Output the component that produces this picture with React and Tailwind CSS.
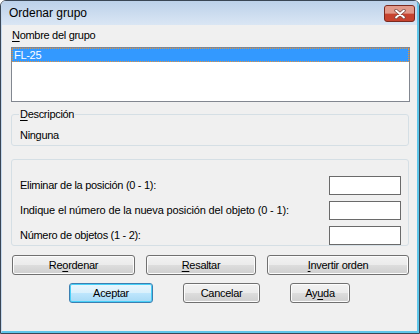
import React from 'react';

const font = { fontFamily: '"Liberation Sans", Arial, sans-serif' };

const Mn = ({ children }) => <span className="underline underline-offset-[2px]">{children}</span>;

const Btn = ({ w, children, primary }) => (
  <div
    className={`${w} h-[20px] flex items-center justify-center rounded-[3px] border text-[11px] tracking-[-0.3px] text-black ${
      primary
        ? 'border-[#3c7fb1] shadow-[inset_0_0_0_1px_#48d0f8] bg-[#d9f0fc] bg-[linear-gradient(#eaf6fd_0%,#d9f0fc_50%,#bee6fd_51%,#a7d9f5_100%)]'
        : 'border-[#707070] shadow-[inset_0_0_0_1px_#fcfcfc] bg-[#e5e5e5] bg-[linear-gradient(#f2f2f2_0%,#ebebeb_50%,#dddddd_51%,#cfcfcf_100%)]'
    }`}
  >
    {children}
  </div>
);

const Row = ({ label, tight }) => (
  <div className="flex items-center justify-between h-[19px]">
    <span className={`text-[11px] text-black leading-[13px] ${tight ? 'tracking-[-0.15px]' : 'tracking-[-0.3px]'}`}>{label}</span>
    <input className="w-[72px] h-[19px] bg-white border border-[#6a6a6a] outline-none" />
  </div>
);

const CloseBtn = () => (
  <div className="relative w-[31px] h-[17px] rounded-[3px] border border-[#7a2a20] bg-[#c7432f] overflow-hidden">
    <div className="h-[7px] bg-[#e29a8b]" />
    <div className="h-[1px] bg-[#d87a69]" />
    <svg className="absolute left-[8px] top-[3px]" width="14" height="10" viewBox="0 0 14 10">
      <path d="M3 1.5 L11 8.5 M11 1.5 L3 8.5" stroke="#7a4a44" strokeWidth="3.4" strokeLinecap="round" />
      <path d="M3 1.5 L11 8.5 M11 1.5 L3 8.5" stroke="#ffffff" strokeWidth="1.8" strokeLinecap="round" />
    </svg>
  </div>
);

export default function App() {
  return (
    <div style={font} className="w-[420px] h-[334px] border border-[#3a4655] rounded-t-[6px] overflow-hidden bg-[#f0f0f0]">
      <div className="h-full flex flex-col border-l border-l-[#c5d9ee] border-r-2 border-r-[#5ec6ea] border-b-2 border-b-[#5ec6ea]">
        {/* title bar */}
        <div className="h-[24px] flex items-center justify-between bg-[#cddcef] bg-[linear-gradient(#bcd1ea,#dae6f4)] pl-[7px] pr-[2px]">
          <span className="text-[12px] text-black">Ordenar grupo</span>
          <CloseBtn />
        </div>

        {/* body */}
        <div className="flex flex-col pl-[9px]">
          <div className="mt-[4px] h-[13px] leading-[13px] text-[11px] tracking-[-0.3px] text-black pl-[1px]">
            <Mn>N</Mn>ombre del grupo
          </div>
          <div className="mt-[5px] w-[399px] h-[55px] bg-white border border-[#828790]">
            <div className="h-[14px] bg-[#3399ff] border border-dotted border-[#e8933a] text-white text-[11px] tracking-[-0.3px] leading-[12px] pl-[1px]">
              FL-25
            </div>
          </div>

          <fieldset className="mt-[6px] w-[398px] border border-[#d5dfe5] rounded-[3px] pl-[8px] pb-[3px]">
            <legend className="text-[11px] leading-[13px] tracking-[-0.3px] text-black px-[1px] -ml-[1px]">
              <Mn>D</Mn>escripción
            </legend>
            <div className="mt-[8px] text-[11px] leading-[13px] tracking-[-0.3px] text-black">Ninguna</div>
          </fieldset>

          <div className="mt-[13px] w-[398px] h-[87px] border border-[#d5dfe5] rounded-[3px] pt-[16px] pl-[8px] pr-[7px] flex flex-col gap-[6px]">
            <Row label="Eliminar de la posición (0 - 1):" />
            <Row label="Indique el número de la nueva posición del objeto (0 - 1):" tight />
            <Row label="Número de objetos (1 - 2):" />
          </div>

          <div className="mt-[9px] flex gap-[11px] pl-[1px]">
            <Btn w="w-[123px]">Re<Mn>o</Mn>rdenar</Btn>
            <Btn w="w-[110px]"><Mn>R</Mn>esaltar</Btn>
            <Btn w="w-[142px]"><Mn>I</Mn>nvertir orden</Btn>
          </div>

          <div className="mt-[8px] flex gap-[30px] pl-[58px]">
            <Btn w="w-[84px]" primary>Aceptar</Btn>
            <Btn w="w-[77px]">Cancelar</Btn>
            <Btn w="w-[60px]">Ay<Mn>u</Mn>da</Btn>
          </div>
        </div>
      </div>
    </div>
  );
}
